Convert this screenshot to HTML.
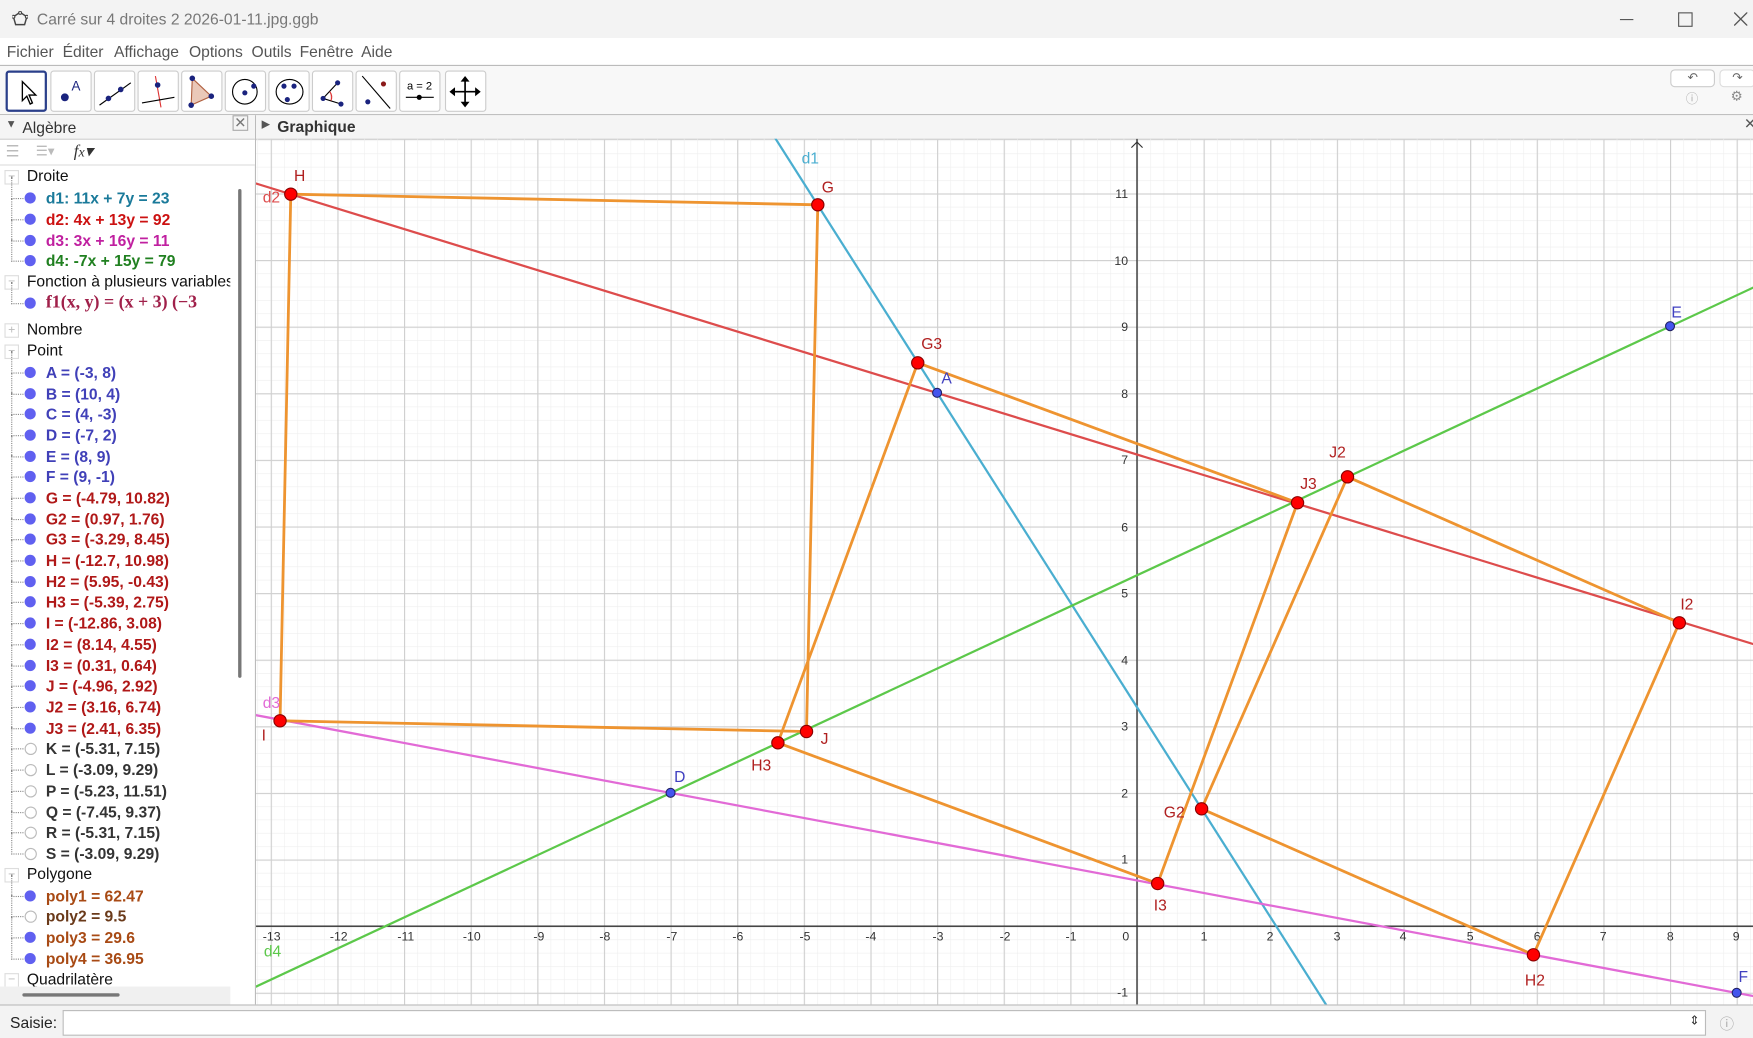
<!DOCTYPE html>
<html><head><meta charset="utf-8">
<style>
html,body{margin:0;padding:0;width:1753px;height:1038px;overflow:hidden;background:#fff;}
#w{position:absolute;left:0;top:0;width:1568px;height:928px;transform:scale(1.11798,1.11853);transform-origin:0 0;font-family:"Liberation Sans",sans-serif;background:#fff;overflow:hidden;}
.abs{position:absolute;}
#title{left:0;top:0;width:1568px;height:34px;background:#f3f3f3;}
#title .t{left:33px;top:9px;font-size:14px;color:#777;}
#menu{left:0;top:34px;width:1568px;height:24px;background:#fff;border-bottom:1px solid #bbb;}
#menu span{position:absolute;top:4px;font-size:14px;color:#555;}
#tb{left:0;top:59px;width:1568px;height:43px;background:#f8f8f8;border-bottom:1px solid #bbb;}
.btn{position:absolute;top:4px;width:35px;height:35px;border:1px solid #ccc;border-radius:3px;background:#fff;}
#alg{left:0;top:103px;width:228px;height:795px;background:#fff;border-right:1px solid #bbb;}
#algh{left:0;top:0;width:228px;height:21px;background:#f5f5f5;border-bottom:1px solid #ccc;font-size:14px;color:#333;}
.row{position:absolute;left:0;height:18.7px;font-size:14px;white-space:nowrap;}
.row .b{position:absolute;left:22px;top:4px;width:10px;height:10px;border-radius:50%;background:#6060f0;}
.row .e{position:absolute;left:22px;top:4px;width:9px;height:9px;border-radius:50%;border:1px solid #bbb;background:#fff;}
.row .tx{position:absolute;left:41px;top:1px;font-weight:bold;}
.row .dot{position:absolute;left:10px;top:-10px;width:10px;height:19px;border-left:1px dotted #888;border-bottom:1px dotted #888;}
.hdr{position:absolute;left:0;font-size:14px;color:#111;white-space:nowrap;width:206px;}
.hdr .m{position:absolute;left:4px;top:3px;width:11px;height:11px;border:1px solid #ddd;font-size:11px;line-height:10px;text-align:center;color:#bbb;}
.hdr .tx{position:absolute;left:24px;top:0;}
#gh{left:229px;top:103px;width:1339px;height:21px;background:#f5f5f5;border-bottom:1px solid #ccc;}
#saisie{left:0;top:898px;width:1568px;height:30px;background:#f3f3f3;border-top:1px solid #bbb;}
</style></head><body><div id="w">
<div class="abs" id="title">
<svg class="abs" style="left:11px;top:10px" width="14" height="14" viewBox="0 0 14 14"><polygon points="7,1 13,5 11,12 3,12 1,5" fill="none" stroke="#444" stroke-width="1.3"/><circle cx="7" cy="1.5" r="1.3" fill="#fff" stroke="#444"/><circle cx="13" cy="5" r="1.3" fill="#fff" stroke="#444"/><circle cx="1" cy="5" r="1.3" fill="#fff" stroke="#444"/></svg>
<span class="abs t">Carré sur 4 droites 2 2026-01-11.jpg.ggb</span>
<div class="abs" style="left:1449px;top:17px;width:12px;height:1px;background:#555"></div>
<div class="abs" style="left:1501px;top:11px;width:11px;height:11px;border:1px solid #555"></div>
<svg class="abs" style="left:1551px;top:11px" width="12" height="12"><path d="M0 0 L12 12 M12 0 L0 12" stroke="#555" stroke-width="1.2"/></svg>
</div>
<div class="abs" id="menu">
<span style="left:6px">Fichier</span><span style="left:56px">Éditer</span><span style="left:102px">Affichage</span><span style="left:169px">Options</span><span style="left:225px">Outils</span><span style="left:268px">Fenêtre</span><span style="left:323px">Aide</span>
</div>
<div class="abs" id="tb">
<div class="btn" style="left:5px;border:2px solid #2a3f8a;width:33px;height:33px"><svg width="33" height="33"><path d="M13 8 L13 25 L17 21 L20 28 L22 27 L19 20 L25 20 Z" fill="#fff" stroke="#000" stroke-width="1.2"/></svg></div>
<div class="btn" style="left:45px"><svg width="35" height="35"><circle cx="12" cy="23" r="3.5" fill="#1a237e"/><text x="18" y="17" font-size="12" fill="#1a237e" font-family="Liberation Sans">A</text></svg></div>
<div class="btn" style="left:84px"><svg width="35" height="35"><line x1="4" y1="30" x2="32" y2="10" stroke="#000"/><circle cx="12" cy="24" r="2.5" fill="#1a237e"/><circle cx="23" cy="16" r="2.5" fill="#1a237e"/></svg></div>
<div class="btn" style="left:123px"><svg width="35" height="35"><line x1="15" y1="4" x2="20" y2="32" stroke="#d33"/><line x1="3" y1="28" x2="32" y2="23" stroke="#000"/><circle cx="17" cy="12" r="2.5" fill="#1a237e"/></svg></div>
<div class="btn" style="left:162px"><svg width="35" height="35"><polygon points="9,6 26,22 8,30" fill="#eac8b8" stroke="#b06040"/><circle cx="9" cy="6" r="2.5" fill="#1a237e"/><circle cx="26" cy="22" r="2.5" fill="#1a237e"/><circle cx="8" cy="30" r="2.5" fill="#1a237e"/></svg></div>
<div class="btn" style="left:201px"><svg width="35" height="35"><circle cx="17" cy="18" r="11" fill="none" stroke="#000"/><circle cx="17" cy="19" r="2.3" fill="#1a237e"/><circle cx="25" cy="13" r="2.3" fill="#1a237e"/></svg></div>
<div class="btn" style="left:240px"><svg width="35" height="35"><ellipse cx="18" cy="18" rx="12" ry="11" fill="none" stroke="#000"/><circle cx="13" cy="13" r="2.3" fill="#1a237e"/><circle cx="22" cy="13" r="2.3" fill="#1a237e"/><circle cx="16" cy="25" r="2.3" fill="#1a237e"/></svg></div>
<div class="btn" style="left:279px"><svg width="35" height="35"><path d="M9 24 L22 10 M9 24 L25 29" stroke="#000" fill="none"/><path d="M15 18 A8 8 0 0 1 16 26" stroke="#d33" fill="#f4c0c0"/><circle cx="9" cy="24" r="2.3" fill="#1a237e"/><circle cx="22" cy="10" r="2.3" fill="#1a237e"/><circle cx="25" cy="29" r="2.3" fill="#1a237e"/></svg></div>
<div class="btn" style="left:318px"><svg width="35" height="35"><line x1="5" y1="4" x2="30" y2="33" stroke="#000"/><circle cx="24" cy="11" r="2.3" fill="#8b1a1a"/><circle cx="10" cy="27" r="2.3" fill="#1a237e"/></svg></div>
<div class="btn" style="left:357px"><svg width="35" height="35"><text x="6" y="16" font-size="10" font-family="Liberation Sans">a = 2</text><line x1="5" y1="23" x2="30" y2="23" stroke="#000"/><circle cx="17" cy="23" r="2.3" fill="#000"/></svg></div>
<div class="btn" style="left:398px"><svg width="35" height="35"><path d="M17 6 V30 M5 18 H29" stroke="#000" stroke-width="1.5"/><path d="M17 4 L13 9 H21Z M17 32 L13 27 H21Z M3 18 L8 14 V22Z M31 18 L26 14 V22Z" fill="#000"/></svg></div>
<div class="abs" style="left:1494px;top:3px;width:38px;height:14px;border:1px solid #ccc;border-radius:4px;background:#fff;font-size:11px;text-align:center;color:#666;line-height:14px">&#8630;</div>
<div class="abs" style="left:1538px;top:3px;width:30px;height:14px;border:1px solid #ddd;border-radius:4px;background:#fff;font-size:11px;text-align:center;color:#666;line-height:14px">&#8631;</div>
<span class="abs" style="left:1508px;top:21px;font-size:11px;color:#aaa">&#9432;</span>
<span class="abs" style="left:1548px;top:20px;font-size:12px;color:#888">&#9881;</span>
</div>
<div class="abs" id="alg">
<div class="abs" id="algh"><span class="abs" style="left:5px;top:3px;font-size:10px;color:#555">&#9660;</span><span class="abs" style="left:20px;top:3px">Algèbre</span><span class="abs" style="left:208px;top:0px;font-size:13px;color:#777;border:1px solid #aaa;line-height:12px;width:12px;text-align:center">&#10005;</span></div>
<div class="abs" style="left:0;top:22px;width:228px;height:22px;background:#fff;border-bottom:1px solid #ddd">
<span class="abs" style="left:5px;top:2px;color:#bbb;font-size:14px">&#9776;</span><span class="abs" style="left:32px;top:3px;color:#bbb;font-size:12px">&#9776;&#9662;</span><span class="abs" style="left:66px;top:1px;font-style:italic;font-family:'Liberation Serif',serif;font-size:15px;color:#333">f<small>x</small>&#9662;</span></div>
<div class="abs" style="left:0;top:44px;width:206px;height:735px;overflow:hidden">
<div class="hdr" style="top:2px"><div class="m">−</div><span class="tx">Droite</span></div>
<div class="row" style="top:21px"><div class="dot"></div><div class="b"></div><span class="tx" style="color:#1a7a9a">d1: 11x + 7y = 23</span></div>
<div class="row" style="top:40px"><div class="dot"></div><div class="b"></div><span class="tx" style="color:#cc1111">d2: 4x + 13y = 92</span></div>
<div class="row" style="top:59px"><div class="dot"></div><div class="b"></div><span class="tx" style="color:#c020a0">d3: 3x + 16y = 11</span></div>
<div class="row" style="top:77px"><div class="dot"></div><div class="b"></div><span class="tx" style="color:#208020">d4: -7x + 15y = 79</span></div>
<div class="hdr" style="top:96px"><div class="m">−</div><span class="tx">Fonction à plusieurs variables</span></div>
<div class="row" style="top:115px"><div class="dot"></div><div class="b"></div><span class="tx" style="color:#a0204a;font-family:'Liberation Serif',serif;font-size:16px;top:0;font-weight:600">f1(x, y) = (x + 3) (−3</span></div>
<div class="hdr" style="top:139px"><div class="m">+</div><span class="tx">Nombre</span></div>
<div class="hdr" style="top:158px"><div class="m">−</div><span class="tx">Point</span></div>
<div class="row" style="top:177px"><div class="dot"></div><div class="b"></div><span class="tx" style="color:#4040b8">A = (-3, 8)</span></div>
<div class="row" style="top:196px"><div class="dot"></div><div class="b"></div><span class="tx" style="color:#4040b8">B = (10, 4)</span></div>
<div class="row" style="top:214px"><div class="dot"></div><div class="b"></div><span class="tx" style="color:#4040b8">C = (4, -3)</span></div>
<div class="row" style="top:233px"><div class="dot"></div><div class="b"></div><span class="tx" style="color:#4040b8">D = (-7, 2)</span></div>
<div class="row" style="top:252px"><div class="dot"></div><div class="b"></div><span class="tx" style="color:#4040b8">E = (8, 9)</span></div>
<div class="row" style="top:270px"><div class="dot"></div><div class="b"></div><span class="tx" style="color:#4040b8">F = (9, -1)</span></div>
<div class="row" style="top:289px"><div class="dot"></div><div class="b"></div><span class="tx" style="color:#b01818">G = (-4.79, 10.82)</span></div>
<div class="row" style="top:308px"><div class="dot"></div><div class="b"></div><span class="tx" style="color:#b01818">G2 = (0.97, 1.76)</span></div>
<div class="row" style="top:326px"><div class="dot"></div><div class="b"></div><span class="tx" style="color:#b01818">G3 = (-3.29, 8.45)</span></div>
<div class="row" style="top:345px"><div class="dot"></div><div class="b"></div><span class="tx" style="color:#b01818">H = (-12.7, 10.98)</span></div>
<div class="row" style="top:364px"><div class="dot"></div><div class="b"></div><span class="tx" style="color:#b01818">H2 = (5.95, -0.43)</span></div>
<div class="row" style="top:382px"><div class="dot"></div><div class="b"></div><span class="tx" style="color:#b01818">H3 = (-5.39, 2.75)</span></div>
<div class="row" style="top:401px"><div class="dot"></div><div class="b"></div><span class="tx" style="color:#b01818">I = (-12.86, 3.08)</span></div>
<div class="row" style="top:420px"><div class="dot"></div><div class="b"></div><span class="tx" style="color:#b01818">I2 = (8.14, 4.55)</span></div>
<div class="row" style="top:439px"><div class="dot"></div><div class="b"></div><span class="tx" style="color:#b01818">I3 = (0.31, 0.64)</span></div>
<div class="row" style="top:457px"><div class="dot"></div><div class="b"></div><span class="tx" style="color:#b01818">J = (-4.96, 2.92)</span></div>
<div class="row" style="top:476px"><div class="dot"></div><div class="b"></div><span class="tx" style="color:#b01818">J2 = (3.16, 6.74)</span></div>
<div class="row" style="top:495px"><div class="dot"></div><div class="b"></div><span class="tx" style="color:#b01818">J3 = (2.41, 6.35)</span></div>
<div class="row" style="top:513px"><div class="dot"></div><div class="e"></div><span class="tx" style="color:#333">K = (-5.31, 7.15)</span></div>
<div class="row" style="top:532px"><div class="dot"></div><div class="e"></div><span class="tx" style="color:#333">L = (-3.09, 9.29)</span></div>
<div class="row" style="top:551px"><div class="dot"></div><div class="e"></div><span class="tx" style="color:#333">P = (-5.23, 11.51)</span></div>
<div class="row" style="top:570px"><div class="dot"></div><div class="e"></div><span class="tx" style="color:#333">Q = (-7.45, 9.37)</span></div>
<div class="row" style="top:588px"><div class="dot"></div><div class="e"></div><span class="tx" style="color:#333">R = (-5.31, 7.15)</span></div>
<div class="row" style="top:607px"><div class="dot"></div><div class="e"></div><span class="tx" style="color:#333">S = (-3.09, 9.29)</span></div>
<div class="hdr" style="top:626px"><div class="m">−</div><span class="tx">Polygone</span></div>
<div class="row" style="top:645px"><div class="dot"></div><div class="b"></div><span class="tx" style="color:#a84a14">poly1 = 62.47</span></div>
<div class="row" style="top:663px"><div class="dot"></div><div class="e"></div><span class="tx" style="color:#6a3a1a">poly2 = 9.5</span></div>
<div class="row" style="top:682px"><div class="dot"></div><div class="b"></div><span class="tx" style="color:#a84a14">poly3 = 29.6</span></div>
<div class="row" style="top:701px"><div class="dot"></div><div class="b"></div><span class="tx" style="color:#a84a14">poly4 = 36.95</span></div>
<div class="hdr" style="top:720px"><div class="m">−</div><span class="tx">Quadrilatère</span></div>
</div>
<div class="abs" style="left:213px;top:66px;width:3px;height:437px;background:#777;border-radius:2px"></div>
<div class="abs" style="left:0;top:779px;width:206px;height:16px;background:#f0f0f0"></div>
<div class="abs" style="left:20px;top:785px;width:87px;height:3px;background:#777;border-radius:2px"></div>
</div>
<div class="abs" id="gh"><span class="abs" style="left:5px;top:3px;font-size:10px;color:#555">&#9654;</span><span class="abs" style="left:19px;top:2px;font-size:14px;font-weight:bold;color:#333">Graphique</span><span class="abs" style="left:1331px;top:0;font-size:13px;color:#555">&#10005;</span></div>
<svg class="abs" style="left:0;top:0" width="1568" height="928">
<defs>
<clipPath id="c"><rect x="229" y="124" width="1339" height="774"/></clipPath>
<pattern id="mn" x="1017" y="828" width="11.92" height="11.91" patternUnits="userSpaceOnUse"><path d="M0 0 H11.92 M0 0 V11.91" stroke="#eeeeee" stroke-width="1" fill="none"/></pattern>
<pattern id="mj" x="1017" y="828" width="59.6" height="59.55" patternUnits="userSpaceOnUse"><path d="M0 0.5 H59.6 M0.5 0 V59.55" stroke="#cfcfcf" stroke-width="1" fill="none"/></pattern>
</defs>
<g clip-path="url(#c)">
<rect x="229" y="124" width="1339" height="774" fill="url(#mn)"/>
<rect x="229" y="124" width="1339" height="774" fill="url(#mj)"/>
<line x1="229" y1="828" x2="1568" y2="828" stroke="#333" stroke-width="1.2"/>
<line x1="1017" y1="124" x2="1017" y2="898" stroke="#333" stroke-width="1.2"/>
<path d="M1012 132 L1017 127 L1022 132" fill="none" stroke="#333"/>
<g font-size="11" fill="#333" font-family="Liberation Sans" text-anchor="middle">
<text x="243" y="841">-13</text><text x="303" y="841">-12</text><text x="363" y="841">-11</text><text x="422" y="841">-10</text><text x="482" y="841">-9</text><text x="541" y="841">-8</text><text x="601" y="841">-7</text><text x="660" y="841">-6</text><text x="720" y="841">-5</text><text x="779" y="841">-4</text><text x="839" y="841">-3</text><text x="899" y="841">-2</text><text x="958" y="841">-1</text><text x="1007" y="841">0</text><text x="1077" y="841">1</text><text x="1136" y="841">2</text><text x="1196" y="841">3</text><text x="1255" y="841">4</text><text x="1315" y="841">5</text><text x="1375" y="841">6</text><text x="1434" y="841">7</text><text x="1494" y="841">8</text><text x="1553" y="841">9</text>
</g>
<g font-size="11" fill="#333" font-family="Liberation Sans" text-anchor="end">
<text x="1009" y="177">11</text><text x="1009" y="237">10</text><text x="1009" y="296">9</text><text x="1009" y="356">8</text><text x="1009" y="415">7</text><text x="1009" y="475">6</text><text x="1009" y="534">5</text><text x="1009" y="594">4</text><text x="1009" y="653">3</text><text x="1009" y="713">2</text><text x="1009" y="772">1</text><text x="1009" y="891">-1</text>
</g>
<g stroke-width="2" fill="none">
<line x1="648.7" y1="53.2" x2="1217.3" y2="947.2" stroke="#4aaed0"/>
<line x1="182.6" y1="149.8" x2="1613" y2="589.6" stroke="#dd4c4c"/>
<line x1="182.6" y1="630.7" x2="1613" y2="898.9" stroke="#e26ad6"/>
<line x1="182.6" y1="903.7" x2="1613" y2="236.2" stroke="#5cc84a"/>
</g>
<g stroke="#ee9430" stroke-width="2.5" fill="none" stroke-linejoin="round">
<polygon points="260.1,173.6 731.5,183.1 721.4,654 250.5,644.4"/>
<polygon points="820.9,324.4 1160.6,449.5 1035.5,789.9 695.8,664.1"/>
<polygon points="1205.3,426.3 1502.1,556.8 1371.6,853.6 1074.8,723.1"/>
</g>
<g fill="#ff0000" stroke="#800" stroke-width="1">
<circle cx="260.1" cy="173.6" r="5.5"/><circle cx="731.5" cy="183.1" r="5.5"/><circle cx="721.4" cy="654" r="5.5"/><circle cx="250.5" cy="644.4" r="5.5"/>
<circle cx="820.9" cy="324.4" r="5.5"/><circle cx="1160.6" cy="449.5" r="5.5"/><circle cx="1035.5" cy="789.9" r="5.5"/><circle cx="695.8" cy="664.1" r="5.5"/>
<circle cx="1205.3" cy="426.3" r="5.5"/><circle cx="1502.1" cy="556.8" r="5.5"/><circle cx="1371.6" cy="853.6" r="5.5"/><circle cx="1074.8" cy="723.1" r="5.5"/>
</g>
<g fill="#4455ee" stroke="#222266" stroke-width="1">
<circle cx="838.2" cy="351.2" r="4"/><circle cx="599.8" cy="708.8" r="4"/><circle cx="1493.8" cy="291.6" r="4"/><circle cx="1553.4" cy="887.6" r="4"/>
</g>
<g font-size="14" font-family="Liberation Sans" fill="#b02020">
<text x="263" y="162">H</text><text x="735" y="172">G</text><text x="734" y="665">J</text><text x="234" y="662">I</text>
<text x="824" y="312">G3</text><text x="1163" y="437">J3</text><text x="1032" y="814">I3</text><text x="672" y="689">H3</text>
<text x="1189" y="409">J2</text><text x="1503" y="545">I2</text><text x="1364" y="881">H2</text><text x="1041" y="731">G2</text>
</g>
<g font-size="14" font-family="Liberation Sans" fill="#4040c0">
<text x="842" y="343">A</text><text x="603" y="699">D</text><text x="1495" y="284">E</text><text x="1555" y="878">F</text>
</g>
<text x="717" y="146" font-size="14" font-family="Liberation Sans" fill="#4aaed0">d1</text>
<text x="235" y="181" font-size="14" font-family="Liberation Sans" fill="#dd4c4c">d2</text>
<text x="235" y="633" font-size="14" font-family="Liberation Sans" fill="#e26ad6">d3</text>
<text x="236" y="855" font-size="14" font-family="Liberation Sans" fill="#5cc84a">d4</text>
</g>
</svg>
<div class="abs" id="saisie">
<span class="abs" style="left:9px;top:7px;font-size:14px;color:#222">Saisie:</span>
<div class="abs" style="left:56px;top:4px;width:1468px;height:21px;border:1px solid #bbb;background:#fff"></div>
<span class="abs" style="left:1511px;top:7px;font-size:11px;color:#333">&#8661;</span>
<span class="abs" style="left:1538px;top:6px;font-size:13px;color:#aaa">&#9432;</span>
</div>
</div></body></html>
